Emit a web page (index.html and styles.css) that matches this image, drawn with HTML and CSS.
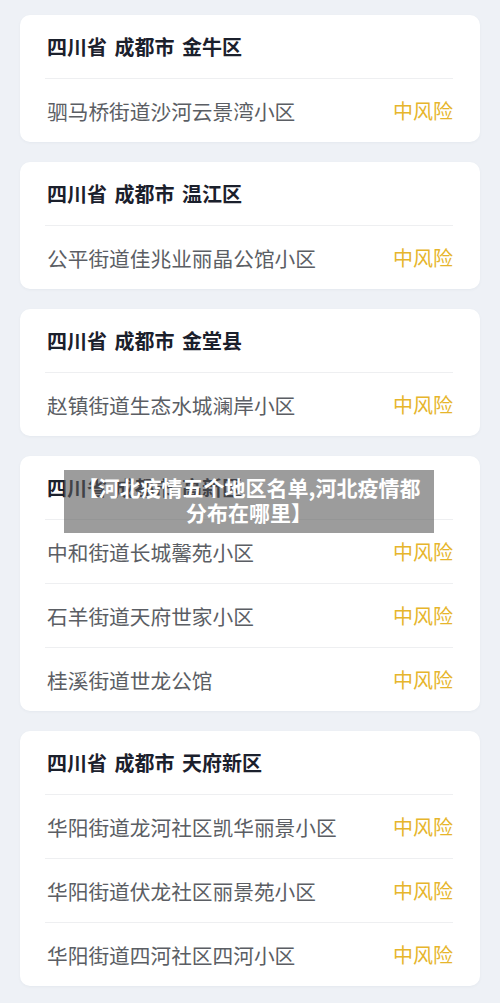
FILE: index.html
```html
<!DOCTYPE html>
<html lang="zh-CN">
<head>
  <meta charset="UTF-8" />
  <meta name="viewport" content="width=device-width, initial-scale=1.0" />
  <title>中风险地区名单</title>
  <link rel="stylesheet" href="styles.css">
</head>
<body>
  <div class="list">
    <!-- 金牛区 -->
    <div class="card">
      <div class="card-head">四川省 成都市 金牛区</div>
      <div class="row">
        <span class="place">驷马桥街道沙河云景湾小区</span>
        <span class="risk">中风险</span>
      </div>
    </div>

    <!-- 温江区 -->
    <div class="card">
      <div class="card-head">四川省 成都市 温江区</div>
      <div class="row">
        <span class="place">公平街道佳兆业丽晶公馆小区</span>
        <span class="risk">中风险</span>
      </div>
    </div>

    <!-- 金堂县 -->
    <div class="card">
      <div class="card-head">四川省 成都市 金堂县</div>
      <div class="row">
        <span class="place">赵镇街道生态水城澜岸小区</span>
        <span class="risk">中风险</span>
      </div>
    </div>

    <!-- 高新区 -->
    <div class="card">
      <div class="card-head">四川省 成都市 高新区</div>
      <div class="row">
        <span class="place">中和街道长城馨苑小区</span>
        <span class="risk">中风险</span>
      </div>
      <div class="row">
        <span class="place">石羊街道天府世家小区</span>
        <span class="risk">中风险</span>
      </div>
      <div class="row">
        <span class="place">桂溪街道世龙公馆</span>
        <span class="risk">中风险</span>
      </div>
    </div>

    <!-- 天府新区 -->
    <div class="card">
      <div class="card-head">四川省 成都市 天府新区</div>
      <div class="row">
        <span class="place">华阳街道龙河社区凯华丽景小区</span>
        <span class="risk">中风险</span>
      </div>
      <div class="row">
        <span class="place">华阳街道伏龙社区丽景苑小区</span>
        <span class="risk">中风险</span>
      </div>
      <div class="row">
        <span class="place">华阳街道四河社区四河小区</span>
        <span class="risk">中风险</span>
      </div>
    </div>
  </div>

  <!-- title caption over the picture -->
  <div class="caption">【河北疫情五个地区名单,河北疫情都<br>分布在哪里】</div>
</body>
</html>
```

FILE: styles.css
```css
body {
  margin: 0;
  background: #eef1f6;
  font-family: "Noto Sans CJK SC", "Noto Sans", sans-serif;
}
.list {
  display: flex;
  flex-direction: column;
  gap: 20px;
  padding: 15px 20px 20px;
}
.card {
  background: #fff;
  border-radius: 10px;
  padding: 0 27px 0 25px;
  box-shadow: 0 1px 3px rgba(60, 70, 90, 0.05);
}
.card-head {
  height: 63px;
  line-height: 63px;
  font-size: 20px;
  font-weight: bold;
  color: #1b202c;
  padding-left: 2px;
  word-spacing: 3px;
}
.row {
  height: 63px;
  border-top: 1px solid #eeeff1;
  display: flex;
  align-items: center;
  justify-content: space-between;
  padding-left: 2px;
}
.place {
  font-size: 20.7px;
  color: #5b5e64;
}
.risk {
  font-size: 20px;
  color: #e6b52c;
}
.caption {
  position: absolute;
  left: 64px;
  top: 470px;
  width: 370px;
  height: 63px;
  box-sizing: border-box;
  padding-top: 5px;
  background: rgba(90, 90, 90, 0.6);
  color: #fff;
  font-size: 21px;
  font-weight: bold;
  line-height: 25px;
  text-align: center;
}
```
